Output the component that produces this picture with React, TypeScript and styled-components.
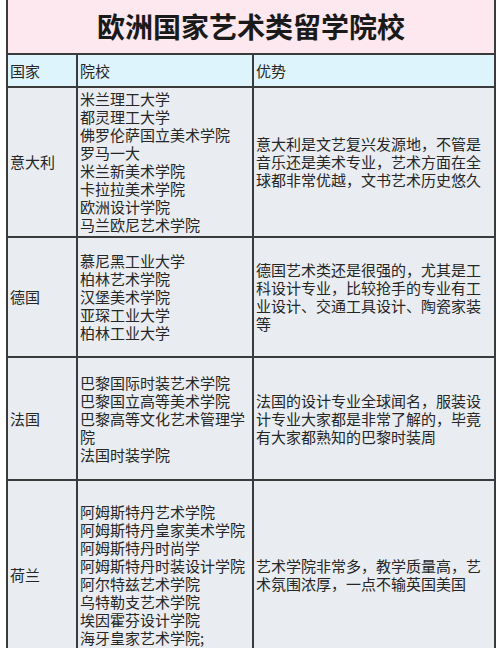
import styled, { createGlobalStyle } from "styled-components";

const GlobalStyle = createGlobalStyle`
    html, body {
        margin: 0;
        padding: 0;
        background: #ffffff;
    }
    body {
        font-family: "Noto Sans CJK SC", "Noto Sans", sans-serif;
        color: #262626;
    }
`;

const Page = styled.div`
    width: 500px;
    height: 648px;
    overflow: hidden;
    padding-left: 6px;
    box-sizing: border-box;
`;

const Table = styled.table`
    width: 488px;
    border-collapse: collapse;
    table-layout: fixed;
    margin-top: -2px;
`;

const TitleCell = styled.th`
    height: 51px;
    background: #fce8ee;
    border: 2px solid #3b3b3b;
    font-size: 28px;
    font-weight: 700;
    color: #1a1a1a;
    text-align: center;
    padding: 0 0 2px 0;
    line-height: 1;
`;

const HeadCell = styled.td`
    height: 31px;
    background: #def4fc;
    border: 2px solid #3b3b3b;
    font-size: 15px;
    line-height: 18px;
    padding: 0 0 0 2px;
    vertical-align: middle;
`;

const Cell = styled.td<{ $h?: number }>`
    height: ${p => (p.$h ? `${p.$h}px` : "auto")};
    background: #e9edf2;
    border: 2px solid #3b3b3b;
    font-size: 15px;
    line-height: 18px;
    padding: 0 0 0 2px;
    vertical-align: middle;
    word-break: break-all;
`;

const School = styled.div`
    line-height: 18px;
`;

interface Row {
    country: string;
    schools: string[];
    advantage: string;
    height: number;
}

const rows: Row[] = [
    {
        country: "意大利",
        schools: [
            "米兰理工大学",
            "都灵理工大学",
            "佛罗伦萨国立美术学院",
            "罗马一大",
            "米兰新美术学院",
            "卡拉拉美术学院",
            "欧洲设计学院",
            "马兰欧尼艺术学院",
        ],
        advantage: "意大利是文艺复兴发源地，不管是音乐还是美术专业，艺术方面在全球都非常优越，文书艺术历史悠久",
        height: 148,
    },
    {
        country: "德国",
        schools: ["慕尼黑工业大学", "柏林艺术学院", "汉堡美术学院", "亚琛工业大学", "柏林工业大学"],
        advantage: "德国艺术类还是很强的，尤其是工科设计专业，比较抢手的专业有工业设计、交通工具设计、陶瓷家装等",
        height: 118,
    },
    {
        country: "法国",
        schools: ["巴黎国际时装艺术学院", "巴黎国立高等美术学院", "巴黎高等文化艺术管理学院", "法国时装学院"],
        advantage: "法国的设计专业全球闻名，服装设计专业大家都是非常了解的，毕竟有大家都熟知的巴黎时装周",
        height: 121,
    },
    {
        country: "荷兰",
        schools: [
            "阿姆斯特丹艺术学院",
            "阿姆斯特丹皇家美术学院",
            "阿姆斯特丹时尚学",
            "阿姆斯特丹时装设计学院",
            "阿尔特兹艺术学院",
            "乌特勒支艺术学院",
            "埃因霍芬设计学院",
            "海牙皇家艺术学院;",
        ],
        advantage: "艺术学院非常多，教学质量高，艺术氛围浓厚，一点不输英国美国",
        height: 188,
    },
];

function App() {
    return (
        <Page>
            <GlobalStyle />
            <Table>
                <colgroup>
                    <col style={{ width: 70 }} />
                    <col style={{ width: 176 }} />
                    <col style={{ width: 242 }} />
                </colgroup>
                <thead>
                    <tr>
                        <TitleCell colSpan={3}>欧洲国家艺术类留学院校</TitleCell>
                    </tr>
                </thead>
                <tbody>
                    <tr>
                        <HeadCell>国家</HeadCell>
                        <HeadCell>院校</HeadCell>
                        <HeadCell>优势</HeadCell>
                    </tr>
                    {rows.map(row => (
                        <tr key={row.country}>
                            <Cell $h={row.height}>{row.country}</Cell>
                            <Cell $h={row.height}>
                                {row.schools.map(s => (
                                    <School key={s}>{s}</School>
                                ))}
                            </Cell>
                            <Cell $h={row.height}>{row.advantage}</Cell>
                        </tr>
                    ))}
                </tbody>
            </Table>
        </Page>
    );
}

export default App;
